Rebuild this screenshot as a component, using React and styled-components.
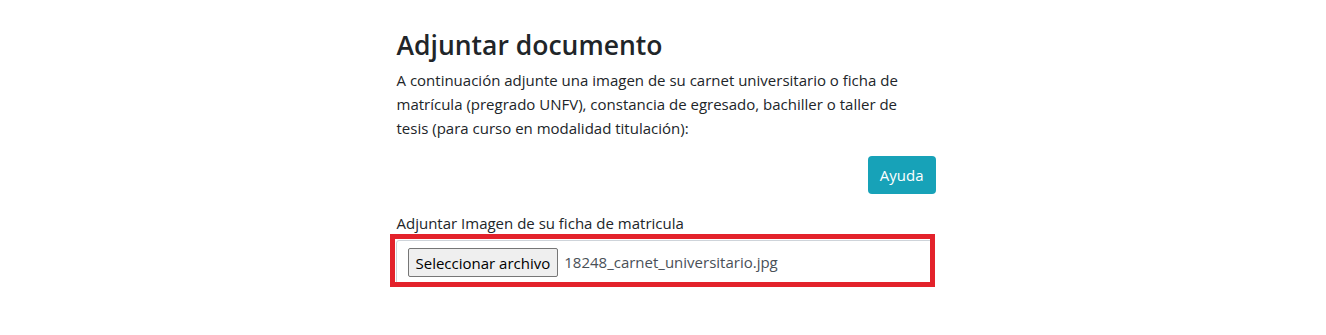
import React from "react";
import styled, { createGlobalStyle } from "styled-components";

const Global = createGlobalStyle`
  body {
    margin: 0;
    background: #ffffff;
    font-family: "Open Sans", "Noto Sans", sans-serif;
    color: #212529;
  }
`;

const Page = styled.div`
  width: 1326px;
  height: 335px;
  display: flex;
  justify-content: center;
`;

const Column = styled.div`
  width: 539px;
  margin-left: 6px;
  padding-top: 28px;
  display: flex;
  flex-direction: column;
`;

const Title = styled.h3`
  margin: 0 0 6px;
  font-size: 26.5px;
  font-weight: 600;
  line-height: 34px;
  color: #212529;
`;

const Intro = styled.p`
  margin: 0;
  font-size: 15px;
  line-height: 24px;
  width: 520px;
`;

const Actions = styled.div`
  display: flex;
  justify-content: flex-end;
  margin-top: 16px;
`;

const HelpButton = styled.button`
  height: 38px;
  padding: 0 12px;
  border: none;
  border-radius: 4px;
  background: #17a2b8;
  color: #ffffff;
  font-family: inherit;
  font-size: 15px;
`;

const Label = styled.label`
  display: block;
  margin-top: 18px;
  margin-bottom: 0;
  font-size: 15px;
  line-height: 22px;
`;

const Highlight = styled.div`
  margin-left: -7px;
  width: 545px;
  border: 5px solid #e3222b;
  box-sizing: border-box;
  height: 53px;
  overflow: hidden;
`;

const FileField = styled.div`
  margin: 1px 0 0 1px;
  width: 560px;
  height: 60px;
  box-sizing: border-box;
  border: 1px solid #ced4da;
  border-radius: 3px;
  padding: 7px 11px;
  display: flex;
  align-items: flex-start;
  gap: 6px;
  font-size: 15px;
  color: #495057;
`;

const FileButton = styled.span`
  height: 29px;
  padding: 0 7px;
  box-sizing: border-box;
  border: 1px solid #767676;
  border-radius: 2px;
  background: #efefef;
  color: #000000;
  display: flex;
  align-items: center;
  font-size: 15px;
`;

const FileName = styled.span`
  line-height: 29px;
`;

export default function App() {
  return (
    <Page>
      <Global />
      <Column>
        <Title>Adjuntar documento</Title>
        <Intro>
          A continuación adjunte una imagen de su carnet universitario o ficha de
          matrícula (pregrado UNFV), constancia de egresado, bachiller o taller de
          tesis (para curso en modalidad titulación):
        </Intro>
        <Actions>
          <HelpButton>Ayuda</HelpButton>
        </Actions>
        <Label>Adjuntar Imagen de su ficha de matricula</Label>
        <Highlight>
          <FileField>
            <FileButton>Seleccionar archivo</FileButton>
            <FileName>18248_carnet_universitario.jpg</FileName>
          </FileField>
        </Highlight>
      </Column>
    </Page>
  );
}
